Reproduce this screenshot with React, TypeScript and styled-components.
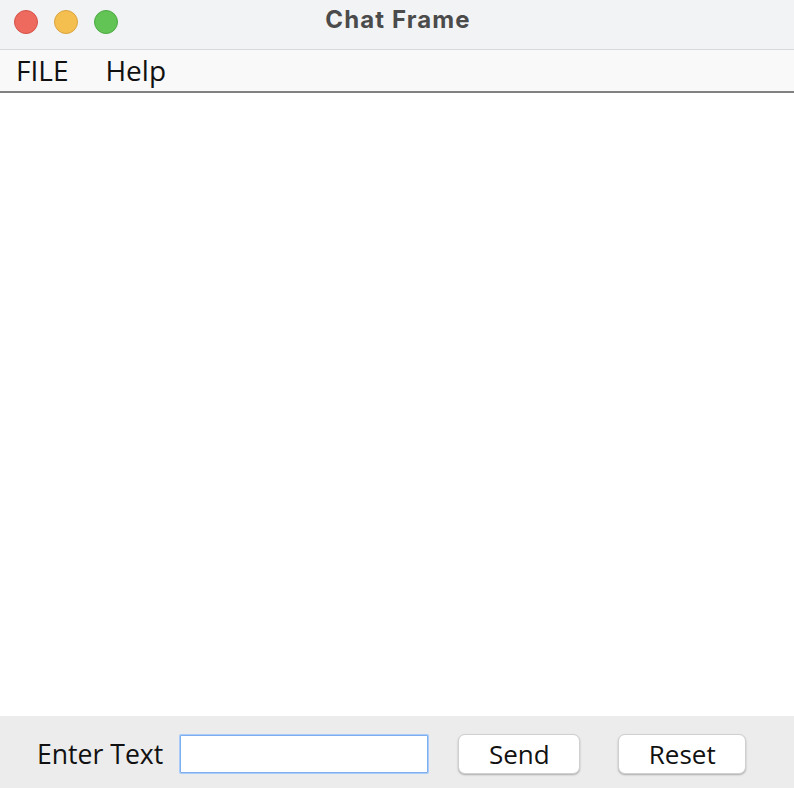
import React from 'react';
import styled, { createGlobalStyle } from 'styled-components';

const GlobalStyle = createGlobalStyle`
  html, body {
    margin: 0;
    padding: 0;
    background: #ffffff;
  }
`;

// window frame
const Window = styled.div`
    display: flex;
    flex-direction: column;
    width: 794px;
    height: 788px;
    overflow: hidden;
    font-family: "Open Sans", "Liberation Sans", sans-serif;
    color: #111;
    `;

const TitleBar = styled.div`
    position: relative;
    display: flex;
    align-items: center;
    justify-content: center;
    height: 50px;
    box-sizing: border-box;
    padding-bottom: 10px;
    background: #f1f3f5;
    border-bottom: 1px solid #d8d9da;
    `;

const Lights = styled.div`
    position: absolute;
    left: 14px;
    top: 10px;
    display: flex;
    gap: 16px;
    `;

const Light = styled.span<{ fill: string; edge: string }>`
    width: 22px;
    height: 22px;
    border-radius: 50%;
    background: ${p => p.fill};
    border: 1px solid ${p => p.edge};
    `;

const Title = styled.div`
    font-family: Inter, "Liberation Sans", sans-serif;
    font-weight: 700;
    font-size: 24px;
    color: #4b4b4b;
    letter-spacing: 1.1px;
    margin-left: 2px;
    `;

const MenuBar = styled.div`
    display: flex;
    align-items: center;
    height: 41px;
    background: #f9f9f9;
    border-bottom: 2px solid #818181;
    padding-left: 16px;
    gap: 37px;
    `;

const MenuItem = styled.span`
    font-size: 28px;
    line-height: 41px;
    color: #111;
    `;

const ChatArea = styled.div`
    flex: 1;
    background: #ffffff;
    `;

const BottomPanel = styled.div`
    display: flex;
    align-items: center;
    height: 72px;
    padding: 3px 0 0 37px;
    box-sizing: border-box;
    background: #ececec;
    `;

const Label = styled.span`
    font-size: 26.6px;
    color: #111;
    margin-right: 17px;
    `;

const TextInput = styled.input`
    width: 248px;
    height: 38px;
    box-sizing: border-box;
    border: 1px solid #7eaef0;
    box-shadow: 0 0 0 1px #a9cdf7;
    border-radius: 1px;
    background: #fff;
    outline: none;
    margin-right: 30px;
    font-size: 20px;
    `;

const Button = styled.button<{ w: number; gap?: number }>`
    width: ${p => p.w}px;
    height: 40px;
    margin-right: ${p => p.gap ?? 0}px;
    background: #ffffff;
    border: 0.5px solid #d0d0d0;
    border-radius: 7px;
    box-shadow: 0 1px 2px rgba(0, 0, 0, 0.28);
    font-family: "Open Sans", "Liberation Sans", sans-serif;
    font-size: 26px;
    color: #111;
    padding: 0;
    line-height: 36px;
    `;

const App = () => {
    return (
        <>
            <GlobalStyle />
            <Window>
                <TitleBar>
                    <Lights>
                        <Light fill="#ee6a5e" edge="#d45248" />
                        <Light fill="#f5bf4f" edge="#d9a340" />
                        <Light fill="#61c454" edge="#4ea944" />
                    </Lights>
                    <Title>Chat Frame</Title>
                </TitleBar>
                <MenuBar>
                    <MenuItem>FILE</MenuItem>
                    <MenuItem>Help</MenuItem>
                </MenuBar>
                <ChatArea />
                <BottomPanel>
                    <Label>Enter Text</Label>
                    <TextInput />
                    <Button w={122} gap={38}>Send</Button>
                    <Button w={128}>Reset</Button>
                </BottomPanel>
            </Window>
        </>
    )
}

export default App;
